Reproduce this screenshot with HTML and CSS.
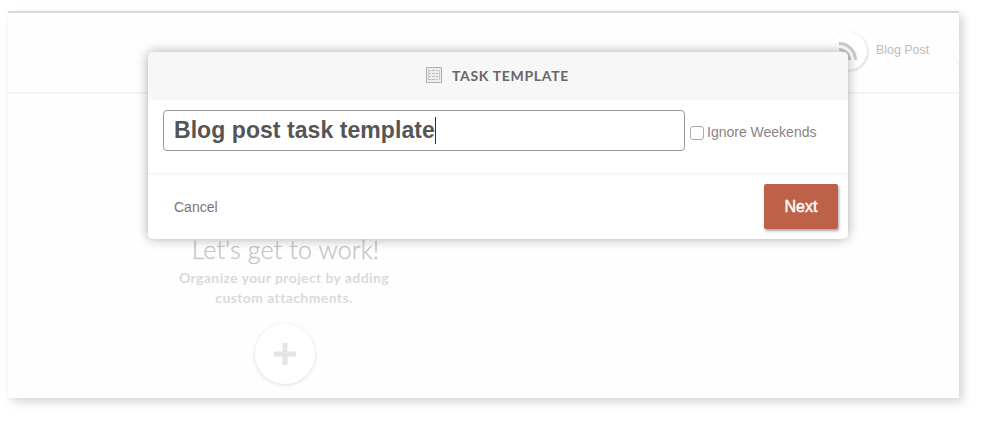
FILE: index.html
```html
<!DOCTYPE html>
<html lang="en">
<head>
<meta charset="utf-8">
<title>Task Template</title>
<link rel="stylesheet" href="styles.css">
</head>
<body>
<div class="window">
  <header class="topbar">
    <span class="circle">
      <svg width="20" height="20" viewBox="0 0 20 20" fill="none" stroke="#cbcbcb" stroke-width="3">
        <path d="M1 2.500A16.500 16.500 0 0 1 17.500 19M1 8.500A10.500 10.500 0 0 1 11.500 19"/>
        <circle cx="3.500" cy="16.500" r="1"/>
      </svg>
    </span>
    <span class="post">Blog Post</span>
    <span class="circle"></span>
  </header>
  <main class="empty">
    <h1 class="empty-title">Let's get to work!</h1>
    <p class="empty-text">Organize your project by adding<br>custom attachments.</p>
    <button class="add" aria-label="Add">
      <svg width="22" height="22" viewBox="0 0 22 22"><path d="M8.500 0h5v8.500H22v5h-8.500V22h-5v-8.500H0v-5h8.500z" fill="#e4e4e4"/></svg>
    </button>
  </main>
</div>
<section class="modal">
  <header class="modal-head">
    <svg width="16" height="16" viewBox="0 0 16 16" fill="none" stroke="#b5adad">
      <path d="M.5.5h15v15H.5z" fill="#eeeded"/>
      <path d="M3 3.500h10M3 6.500h10M3 9.500h10M3 12.500h10" stroke="#c3bdbd" stroke-dasharray="2 1 3 1"/>
      <path d="M2.500 3v10M13.500 3v10" stroke="#cbc5c5"/>
    </svg>
    <h2 class="modal-title">TASK TEMPLATE</h2>
  </header>
  <div class="modal-body">
    <div class="field"><span class="field-text">Blog post task template</span><i class="caret"></i></div>
    <span class="checkbox"></span>
    <span class="check-label">Ignore Weekends</span>
  </div>
  <footer class="modal-foot">
    <span class="cancel">Cancel</span>
    <button class="next">Next</button>
  </footer>
</section>
</body>
</html>
```
FILE: styles.css
```css
* { box-sizing: border-box; }
body {
  margin: 0;
  width: 985px;
  height: 425px;
  overflow: hidden;
  background: #fff;
  padding: 11px 0 0 8px;
  font-family: "Liberation Sans", sans-serif;
  white-space: nowrap;
}
.window {
  width: 951px;
  height: 387px;
  overflow: hidden;
  background: #fefefe;
  border-top: 2px solid #d9d9d9;
  box-shadow: 4px 4px 9px rgba(0, 0, 0, .17);
}
.topbar {
  height: 80px;
  padding: 19px 0 0 821px;
  display: flex;
  border-bottom: 1px solid #f0f0f0;
  box-shadow: 0 1px 2px rgba(0, 0, 0, .03);
}
.circle {
  flex: none;
  width: 38px;
  height: 38px;
  border-radius: 50%;
  background: #fff;
  box-shadow: 1px 1px 3px rgba(0, 0, 0, .16);
  padding: 9px 0 0 9px;
}
.post {
  flex: none;
  width: 87px;
  padding: 11px 0 0 9px;
  font-size: 12.5px;
  line-height: 14px;
  letter-spacing: -.05px;
  color: #bdbdbd;
}
.empty {
  width: 552px;
  text-align: center;
  font-family: Lato, sans-serif;
}
.empty-title {
  margin: 141px 0 0;
  padding-left: 3px;
  font-size: 25px;
  line-height: 30px;
  font-weight: 300;
  letter-spacing: .15px;
  color: #c6c6c6;
  -webkit-text-stroke: .3px #c6c6c6;
}
.empty-text {
  margin: 4px 0 0;
  font-size: 14px;
  line-height: 20px;
  font-weight: 700;
  letter-spacing: .39px;
  color: #dadada;
}
.add {
  display: flex;
  align-items: center;
  justify-content: center;
  width: 60px;
  height: 60px;
  margin: 16px auto 0 247px;
  padding: 0;
  border: 0;
  border-radius: 50%;
  background: #fff;
  box-shadow: 0 1px 4px rgba(0, 0, 0, .13);
}
.modal {
  position: absolute;
  left: 148px;
  top: 52px;
  width: 700px;
  height: 187px;
  border-radius: 5px;
  background: #fff;
  box-shadow: 0 0 12px rgba(0, 0, 0, .33);
}
.modal-head {
  height: 48px;
  display: flex;
  align-items: center;
  padding-left: 278px;
  gap: 10px;
  border-radius: 5px 5px 0 0;
  background: #f7f7f7;
}
.modal-head svg { position: relative; top: -1px; }
.modal-title {
  margin: 0;
  font: 700 14px/20px Lato, sans-serif;
  letter-spacing: .68px;
  color: #686666;
}
.modal-body {
  height: 75px;
  display: flex;
  align-items: flex-start;
  padding: 10px 0 0 15px;
  border-bottom: 2px solid #f6f6f6;
}
.field {
  width: 522px;
  height: 41px;
  display: flex;
  align-items: center;
  padding-left: 10px;
  border: 1px solid #999;
  border-radius: 4px;
  color: #555;
  font-size: 23px;
  font-weight: 700;
  letter-spacing: .06px;
}
.caret { width: 1px; height: 27px; background: #333; }
.checkbox {
  width: 14px;
  height: 14px;
  margin: 16px 3px 0 5px;
  border: 1px solid #aaa;
  border-radius: 3px;
}
.check-label {
  margin-top: 14px;
  font-size: 14px;
  line-height: 16px;
  color: #898383;
}
.modal-foot {
  display: flex;
  justify-content: space-between;
  padding: 9px 10px 0 26px;
}
.cancel {
  margin-top: 15px;
  font-size: 14px;
  line-height: 16px;
  color: #7a7474;
}
.next {
  width: 74px;
  height: 45px;
  padding: 0;
  border: 0;
  border-radius: 2px;
  background: #bd6248;
  box-shadow: 1px 2px 3px rgba(0, 0, 0, .35);
  color: #fff;
  font: 16px/20px "Liberation Sans", sans-serif;
  -webkit-text-stroke: .45px #fff;
}
```
